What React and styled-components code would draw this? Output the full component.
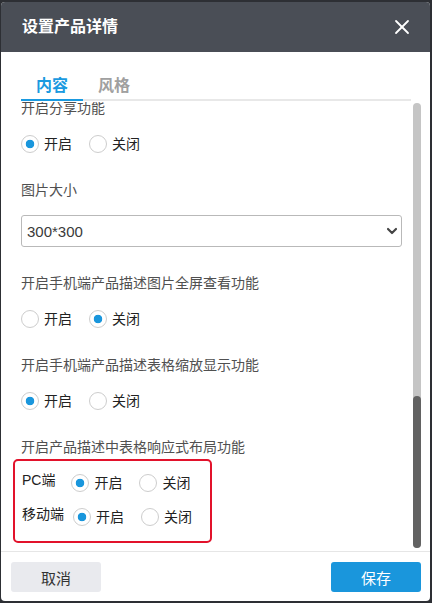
import React, { useLayoutEffect, useRef, useState } from "react";
import styled, { createGlobalStyle } from "styled-components";
import { X, ChevronDown } from "lucide-react";

const GlobalStyle = createGlobalStyle`
  html, body {
    margin: 0;
    height: 100%;
    overflow: hidden;
    background: #2d2f34;
  }
  body {
    font-family: "Liberation Sans", "Noto Sans CJK SC", sans-serif;
  }
  * {
    box-sizing: border-box;
  }
`;

const hiddenFields = [
  { id: "name", label: "显示产品名称", on: true },
  { id: "price", label: "显示产品价格", on: true },
  { id: "code", label: "显示产品编号", on: false },
  { id: "category", label: "显示产品分类", on: true },
  { id: "buy", label: "显示购买按钮", on: true },
  { id: "inquiry", label: "显示询盘按钮", on: false },
  { id: "comment", label: "开启产品评论功能", on: false },
  { id: "related", label: "显示相关产品", on: true },
  { id: "zoom", label: "开启产品放大镜功能", on: true },
  { id: "prevnext", label: "显示上一个下一个产品", on: true },
];

export default function App() {
  const scrollRef = useRef(null);
  const trackRef = useRef(null);
  const [thumb, setThumb] = useState({ top: 0, height: 0 });
  const [tab, setTab] = useState("content");
  const [size, setSize] = useState("300*300");
  const [values, setValues] = useState(() => {
    const init = {};
    hiddenFields.forEach((f) => (init[f.id] = f.on));
    return {
      ...init,
      share: true,
      fullscreen: false,
      tableZoom: true,
      pc: true,
      mobile: true,
    };
  });

  const updateThumb = () => {
    const el = scrollRef.current;
    const track = trackRef.current;
    if (!el || !track) return;
    const trackH = track.clientHeight;
    const height = Math.max(24, (trackH * el.clientHeight) / el.scrollHeight);
    const max = el.scrollHeight - el.clientHeight;
    const top = max > 0 ? ((trackH - height) * el.scrollTop) / max : 0;
    setThumb({ top, height });
  };

  useLayoutEffect(() => {
    const el = scrollRef.current;
    if (el) el.scrollTop = el.scrollHeight;
    updateThumb();
  }, []);

  const set = (id, on) => setValues({ ...values, [id]: on });

  const renderSwitch = (id) => (
    <RadioRow>
      <RadioOption>
        <RadioInput type="radio" name={id} checked={values[id]} onChange={() => set(id, true)} />
        开启
      </RadioOption>
      <RadioOption>
        <RadioInput type="radio" name={id} checked={!values[id]} onChange={() => set(id, false)} />
        关闭
      </RadioOption>
    </RadioRow>
  );

  return (
    <>
      <GlobalStyle />
      <Modal>
        <Header>
          <Title>设置产品详情</Title>
          <CloseBtn aria-label="关闭">
            <X size={24} strokeWidth={1.8} />
          </CloseBtn>
        </Header>

        <Tabs>
          <TabBar>
            <Tab $active={tab === "content"} onClick={() => setTab("content")}>
              内容
            </Tab>
            <Tab $active={tab === "style"} onClick={() => setTab("style")}>
              风格
            </Tab>
          </TabBar>
        </Tabs>

        <Body>
          <ScrollArea ref={scrollRef} onScroll={updateThumb}>
            {hiddenFields.map((f) => (
              <Field key={f.id}>
                <FieldLabel>{f.label}</FieldLabel>
                {renderSwitch(f.id)}
              </Field>
            ))}

            <Field>
              <FieldLabel>开启分享功能</FieldLabel>
              {renderSwitch("share")}
            </Field>

            <Field>
              <FieldLabel $gap={15}>图片大小</FieldLabel>
              <SelectWrap>
                <Select value={size} onChange={(e) => setSize(e.target.value)}>
                  <option>300*300</option>
                  <option>400*400</option>
                  <option>500*500</option>
                  <option>600*600</option>
                </Select>
                <SelectArrow>
                  <ChevronDown size={16} strokeWidth={3.2} />
                </SelectArrow>
              </SelectWrap>
            </Field>

            <Field>
              <FieldLabel>开启手机端产品描述图片全屏查看功能</FieldLabel>
              {renderSwitch("fullscreen")}
            </Field>

            <Field>
              <FieldLabel>开启手机端产品描述表格缩放显示功能</FieldLabel>
              {renderSwitch("tableZoom")}
            </Field>

            <Field $last>
              <FieldLabel $gap={2}>开启产品描述中表格响应式布局功能</FieldLabel>
              <Highlight>
                <DeviceRow>
                  <DeviceLabel $space={16}>PC端</DeviceLabel>
                  {renderSwitch("pc")}
                </DeviceRow>
                <DeviceRow>
                  <DeviceLabel $space={9}>移动端</DeviceLabel>
                  {renderSwitch("mobile")}
                </DeviceRow>
              </Highlight>
            </Field>
          </ScrollArea>
          <Track ref={trackRef}>
            <Thumb style={{ top: thumb.top, height: thumb.height }} />
          </Track>
        </Body>

        <Footer>
          <Button>取消</Button>
          <Button $primary>保存</Button>
        </Footer>
      </Modal>
    </>
  );
}

const Modal = styled.div`
  width: 429px;
  height: 599px;
  margin: 2px 2px 2px 1px;
  background: #fff;
  border-radius: 4px;
  overflow: hidden;
  display: flex;
  flex-direction: column;
`;

const Header = styled.div`
  height: 50px;
  flex-shrink: 0;
  background: #4a4e56;
  display: flex;
  align-items: center;
  justify-content: space-between;
  padding: 0 16px 0 21px;
`;

const Title = styled.h1`
  margin: 0;
  color: #fff;
  font-size: 16px;
  font-weight: 700;
  line-height: 22px;
`;

const CloseBtn = styled.button`
  border: 0;
  padding: 0;
  background: none;
  color: #fff;
  display: flex;
  cursor: pointer;
`;

const Tabs = styled.div`
  flex-shrink: 0;
  padding: 23px 19px 1px 20px;
`;

const TabBar = styled.div`
  display: flex;
  border-bottom: 2px solid #e8e8e8;
`;

const Tab = styled.div`
  padding: 0 15px 2px;
  font-size: 16px;
  font-weight: 700;
  line-height: 22px;
  color: ${(p) => (p.$active ? "#1a9ae0" : "#a0a0a0")};
  border-bottom: 2px solid ${(p) => (p.$active ? "#1a9ae0" : "transparent")};
  margin-bottom: -2px;
  cursor: pointer;
`;

const Body = styled.div`
  flex: 1;
  min-height: 0;
  display: flex;
  margin: 0 9px 3px 12px;
`;

const ScrollArea = styled.div`
  flex: 1;
  min-width: 0;
  overflow-y: auto;
  padding: 36px 11px 5px 8px;
  scrollbar-width: none;

  &::-webkit-scrollbar {
    display: none;
  }
`;

const Track = styled.div`
  position: relative;
  width: 8px;
  flex-shrink: 0;
  margin-top: 1px;
  background: #c5c5c5;
  border-radius: 4px;
`;

const Thumb = styled.div`
  position: absolute;
  left: 0;
  right: 0;
  background: #626262;
  border-radius: 4px;
`;

const Field = styled.div`
  margin-bottom: ${(p) => (p.$last ? 0 : 26)}px;
`;

const FieldLabel = styled.div`
  font-size: 14px;
  line-height: 20px;
  color: #505050;
  margin-bottom: ${(p) => p.$gap ?? 16}px;
`;

const RadioRow = styled.div`
  display: flex;
  align-items: center;
  height: 20px;
  gap: 17px;
`;

const RadioOption = styled.label`
  display: inline-flex;
  align-items: center;
  gap: 5px;
  font-size: 14px;
  line-height: 20px;
  color: #222;
  cursor: pointer;
`;

const RadioInput = styled.input`
  appearance: none;
  margin: 0;
  width: 18px;
  height: 18px;
  border: 1px solid #cdcdcd;
  border-radius: 50%;
  background: #fff;
  cursor: pointer;

  &:checked {
    background: radial-gradient(circle, #1a96dc 0 4px, #fff 4.6px);
  }
`;

const SelectWrap = styled.div`
  position: relative;
`;

const Select = styled.select`
  appearance: none;
  width: 100%;
  height: 32px;
  border: 1px solid #b9b9b9;
  border-radius: 3px;
  background: #fff;
  padding: 0 24px 0 5px;
  font-family: "Liberation Sans", "Noto Sans CJK SC", sans-serif;
  font-size: 15px;
  color: #3a3a3a;
  outline: none;
`;

const SelectArrow = styled.span`
  position: absolute;
  right: 2px;
  top: 8px;
  color: #444;
  display: flex;
  pointer-events: none;
`;

const Highlight = styled.div`
  width: 199px;
  margin-left: -8px;
  border: 2px solid #e2122b;
  border-radius: 5px;
  padding: 12px 7px 14px;
  display: flex;
  flex-direction: column;
  gap: 14px;
`;

const DeviceRow = styled.div`
  display: flex;
  align-items: flex-start;
  height: 20px;
`;

const DeviceLabel = styled.span`
  font-size: 14px;
  line-height: 14px;
  color: #222;
  margin-right: ${(p) => p.$space}px;
`;

const Footer = styled.div`
  flex-shrink: 0;
  border-top: 1px solid #e6e6e6;
  padding: 10px 9px 9px 10px;
  display: flex;
  justify-content: space-between;
`;

const Button = styled.button`
  width: 90px;
  height: 30px;
  border: 0;
  border-radius: 3px;
  font-family: "Liberation Sans", "Noto Sans CJK SC", sans-serif;
  font-size: 15px;
  background: ${(p) => (p.$primary ? "#1a96dc" : "#e9eaee")};
  color: ${(p) => (p.$primary ? "#fff" : "#333")};
  cursor: pointer;
`;
